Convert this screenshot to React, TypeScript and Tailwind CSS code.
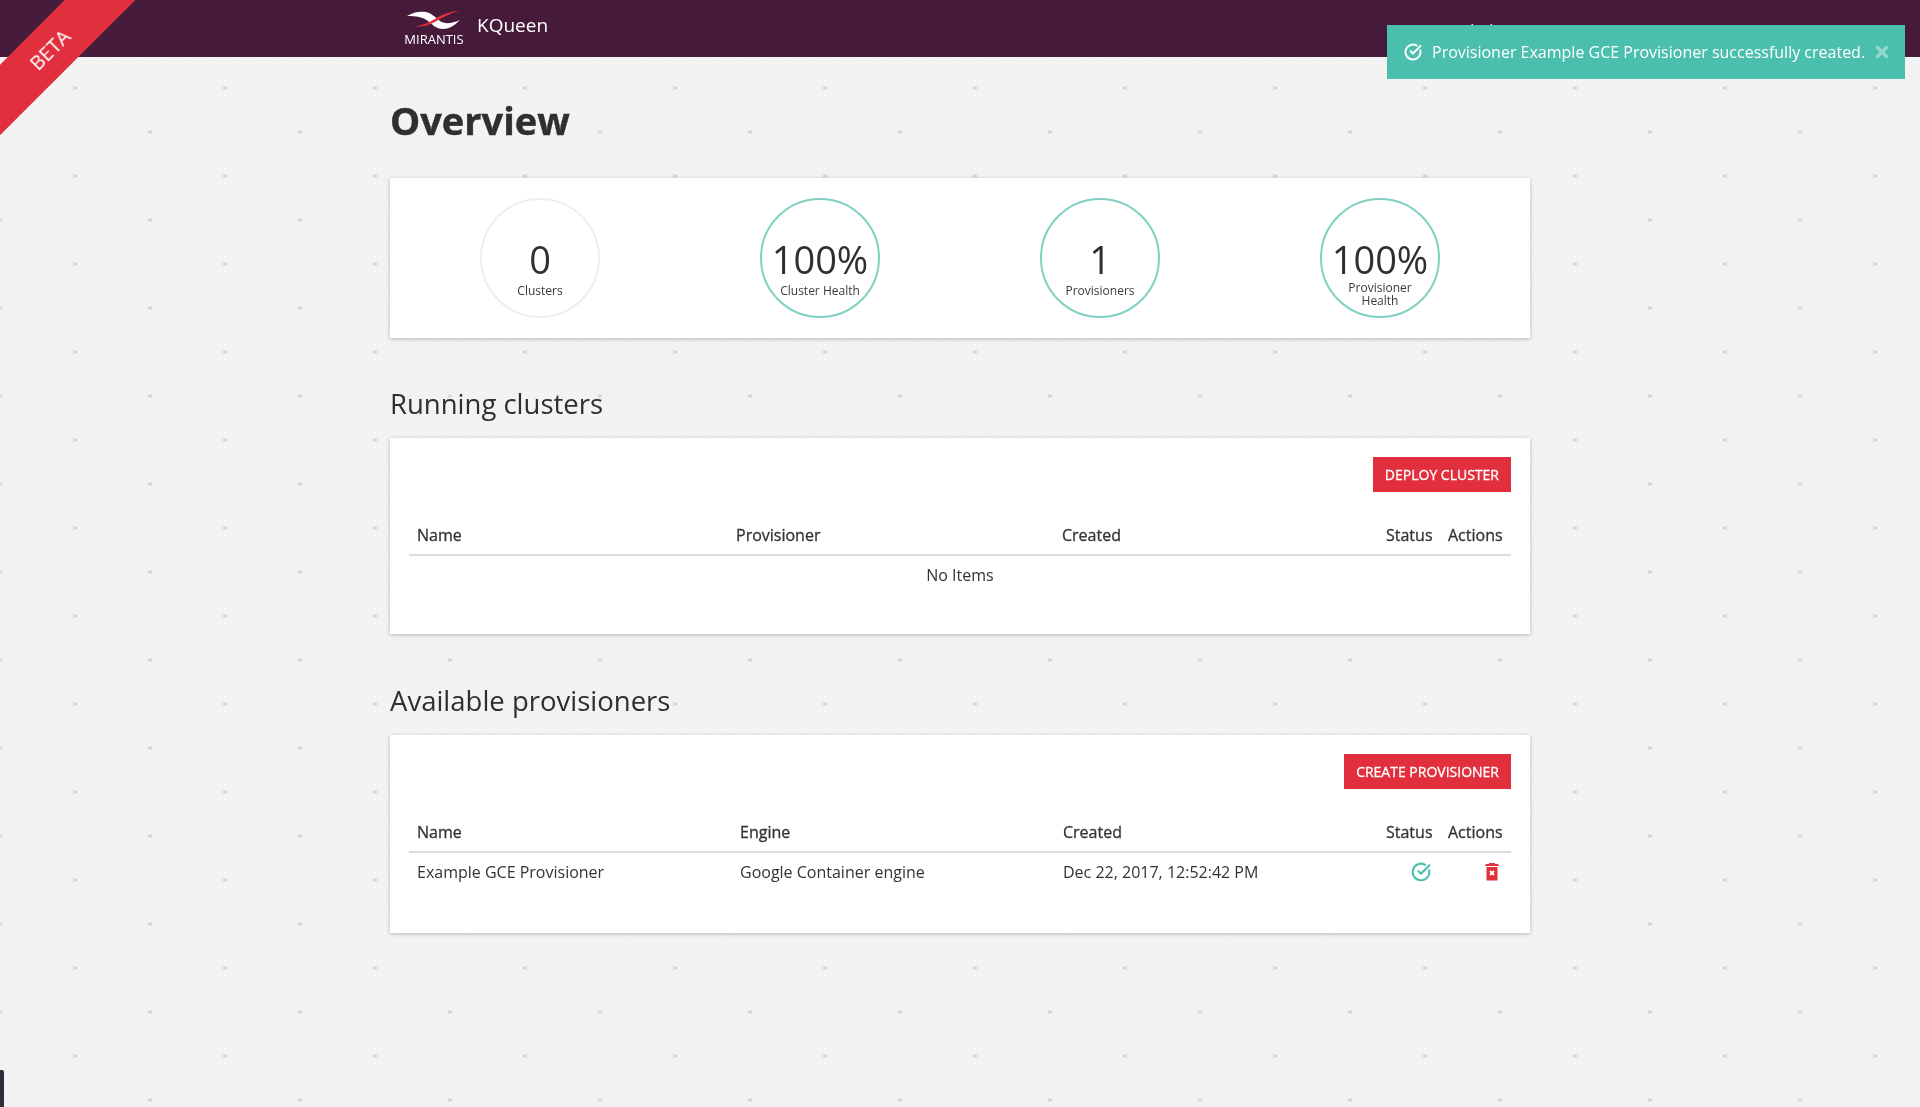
import React from 'react';
import { CircleCheckBig, X } from 'lucide-react';

const stats = [
  { value: '0', label: 'Clusters', active: false, twoLine: false },
  { value: '100%', label: 'Cluster Health', active: true, twoLine: false },
  { value: '1', label: 'Provisioners', active: true, twoLine: false },
  { value: '100%', label: 'Provisioner Health', active: true, twoLine: true },
];

const Backdrop = () => (
  <svg className="fixed inset-0 -z-10 w-full h-full" aria-hidden="true">
    <defs>
      <pattern id="fine-a" width="6" height="3.52" patternUnits="userSpaceOnUse">
        <path d="M0 3.52L6 0" stroke="#eeeeee" strokeWidth="1" fill="none" />
      </pattern>
      <pattern id="fine-b" width="6" height="3.52" patternUnits="userSpaceOnUse">
        <path d="M0 0L6 3.52" stroke="#eeeeee" strokeWidth="1" fill="none" />
      </pattern>
      <pattern id="tile" width="150" height="88" patternUnits="userSpaceOnUse">
        <path d="M0 44L75 0M75 0L150 44M150 44L75 88M75 88L0 44" stroke="#f0f0f0" strokeWidth="1" fill="none" />
        <path d="M73 -1.5L77 1.5M77 -1.5L73 1.5M73 86.5L77 89.5M77 86.5L73 89.5M-2 42.5L2 45.5M2 42.5L-2 45.5M148 42.5L152 45.5M152 42.5L148 45.5" stroke="#c9c9c9" strokeWidth="1" fill="none" />
      </pattern>
    </defs>
    <rect width="100%" height="100%" fill="#f5f5f5" />
    <rect width="100%" height="100%" fill="url(#fine-a)" opacity="0.5" />
    <rect width="100%" height="100%" fill="url(#fine-b)" opacity="0.5" />
    <rect width="100%" height="100%" fill="url(#tile)" />
  </svg>
);

const Logo = () => (
  <div className="flex flex-col items-center w-[58px]">
    <svg width="54" height="19" viewBox="0 0 54 19" className="block">
      <path d="M0 5C6 1 13 0 19 1C26 3 29 7 33 10C37 13 44 13 53 9C47 15 42 18 36 18C29 18 25 13 21 10C16 6 9 5 0 5Z" fill="#fff" />
      <path d="M8 15C17 15 26 9 33 5C39 2 46 0 52 0C44 2 39 5 33 8C25 13 16 17 8 15Z" fill="#e32d3c" />
    </svg>
    <span className="text-[13px] leading-[14px] mt-[2px] text-white font-['Open_Sans']">MIRANTIS</span>
  </div>
);

const TrashIcon = () => (
  <svg width="14" height="18" viewBox="0 0 14 18" className="block">
    <rect x="0.5" y="1" width="13" height="2" fill="#e12f3d" />
    <rect x="4" y="0" width="6" height="2" fill="#e12f3d" />
    <path d="M1.5 4H12.5V17.5H1.5Z" fill="#e12f3d" />
    <path d="M5 8L9 12M9 8L5 12" stroke="#fff" strokeWidth="1.8" />
  </svg>
);

const Stat = ({ value, label, active, twoLine }: { value: string; label: string; active: boolean; twoLine: boolean }) => (
  <div className="flex justify-center">
    <div
      className={`w-[120px] h-[120px] rounded-full border-2 bg-white flex flex-col items-center pt-[39px] ${
        active ? 'border-[#7fd1c3]' : 'border-[#eeeeee]'
      }`}
    >
      <div className="text-[38px] leading-[40px] text-[#2f2f2f]">{value}</div>
      <div className={`text-[12px] leading-[12.5px] text-[#3a3a3a] text-center w-[90px] ${twoLine ? 'mt-[3px]' : 'mt-[6px]'}`}>{label}</div>
    </div>
  </div>
);

type Row = { cells: React.ReactNode[] };

const DataTable = ({ heads, widths, rows }: { heads: string[]; widths: string[]; rows: Row[] }) => (
  <table className="w-full table-fixed border-collapse text-[16px] text-[#333]">
    <colgroup>
      {widths.map((w, i) => (
        <col key={i} className={w} />
      ))}
    </colgroup>
    <thead>
      <tr className="border-b-2 border-[#dddddd]">
        {heads.map((h) => (
          <th key={h} className="h-[41px] px-2 pt-[1px] text-left font-medium whitespace-nowrap [-webkit-text-stroke:0.3px_#333]">
            {h}
          </th>
        ))}
      </tr>
    </thead>
    <tbody>
      {rows.length === 0 ? (
        <tr>
          <td colSpan={heads.length} className="h-[39px] text-center">
            No Items
          </td>
        </tr>
      ) : (
        rows.map((r, i) => (
          <tr key={i}>
            {r.cells.map((c, j) => (
              <td key={j} className="h-[41px] px-2 pb-[2px] whitespace-nowrap">
                {c}
              </td>
            ))}
          </tr>
        ))
      )}
    </tbody>
  </table>
);

const Panel = ({ action, children }: { action: string; children: React.ReactNode }) => (
  <div className="bg-white shadow-[0_1px_4px_rgba(0,0,0,0.25)] px-[19px] pt-[19px] pb-[40px]">
    <div className="flex justify-end mb-[22px]">
      <button className="h-[35px] px-3 bg-[#e12f3d] text-white text-[14px] font-medium [-webkit-text-stroke:0.3px_#fff]">{action}</button>
    </div>
    {children}
  </div>
);

export default function App() {
  return (
    <div className="relative min-h-[1107px] font-['Open_Sans',sans-serif] overflow-hidden">
      <Backdrop />

      {/* beta ribbon */}
      <div className="absolute z-20 left-[-50px] top-[25px] w-[200px] h-[50px] -rotate-45 bg-[#e12f3d] flex items-center justify-center">
        <span className="text-white text-[20px]">BETA</span>
      </div>

      <header className="h-[57px] bg-[#461b39]">
        <div className="w-[1170px] mx-auto h-full px-[15px] flex items-center">
          <div className="ml-[15px] flex items-center">
            <Logo />
            <span className="ml-[14px] text-[19px] text-white -mt-[6px]">KQueen</span>
          </div>
          <span className="ml-auto mr-[27px] text-[16px] text-white mt-[2px]">admin</span>
        </div>
      </header>

      {/* toast */}
      <div className="absolute z-30 right-[15px] top-[25px] w-[518px] h-[54px] bg-[#4bbfad] text-white flex items-center pl-[17px] pr-[14px]">
        <CircleCheckBig size={18} strokeWidth={2.5} />
        <span className="ml-[10px] text-[16px] whitespace-nowrap">Provisioner Example GCE Provisioner successfully created.</span>
        <X size={18} strokeWidth={4.5} className="ml-auto opacity-40" />
      </div>

      <main className="w-[1170px] mx-auto px-[15px]">
        <h1 className="mt-[41px] text-[38px] leading-[44px] font-bold text-[#2f2f2f] [-webkit-text-stroke:0.4px_#2f2f2f]">Overview</h1>

        <section className="mt-[36px] h-[160px] bg-white shadow-[0_1px_4px_rgba(0,0,0,0.25)] px-[10px] pt-[20px] grid grid-cols-4">
          {stats.map((s) => (
            <Stat key={s.label} {...s} />
          ))}
        </section>

        <h2 className="mt-[48px] text-[27.5px] leading-[36px] text-[#2f2f2f]">Running clusters</h2>
        <div className="mt-[16px]">
          <Panel action="DEPLOY CLUSTER">
            <DataTable
              heads={['Name', 'Provisioner', 'Created', 'Status', 'Actions']}
              widths={['w-[319px]', 'w-[326px]', 'w-[324px]', 'w-[62px]', 'w-[71px]']}
              rows={[]}
            />
          </Panel>
        </div>

        <h2 className="mt-[49px] text-[27.5px] leading-[36px] text-[#2f2f2f]">Available provisioners</h2>
        <div className="mt-[16px]">
          <Panel action="CREATE PROVISIONER">
            <DataTable
              heads={['Name', 'Engine', 'Created', 'Status', 'Actions']}
              widths={['w-[323px]', 'w-[323px]', 'w-[323px]', 'w-[62px]', 'w-[71px]']}
              rows={[
                {
                  cells: [
                    'Example GCE Provisioner',
                    'Google Container engine',
                    'Dec 22, 2017, 12:52:42 PM',
                    <div className="flex justify-end mr-[1px]">
                      <CircleCheckBig size={20} strokeWidth={2.5} className="text-[#4bbfad]" />
                    </div>,
                    <div className="flex justify-end pr-[4px]">
                      <TrashIcon />
                    </div>,
                  ],
                },
              ]}
            />
          </Panel>
        </div>
      </main>

      {/* devtools handle bottom left */}
      <div className="absolute left-0 bottom-0 w-[4px] h-[37px] bg-[#2b2f3b] rounded-tr-[2px]" />
    </div>
  );
}
